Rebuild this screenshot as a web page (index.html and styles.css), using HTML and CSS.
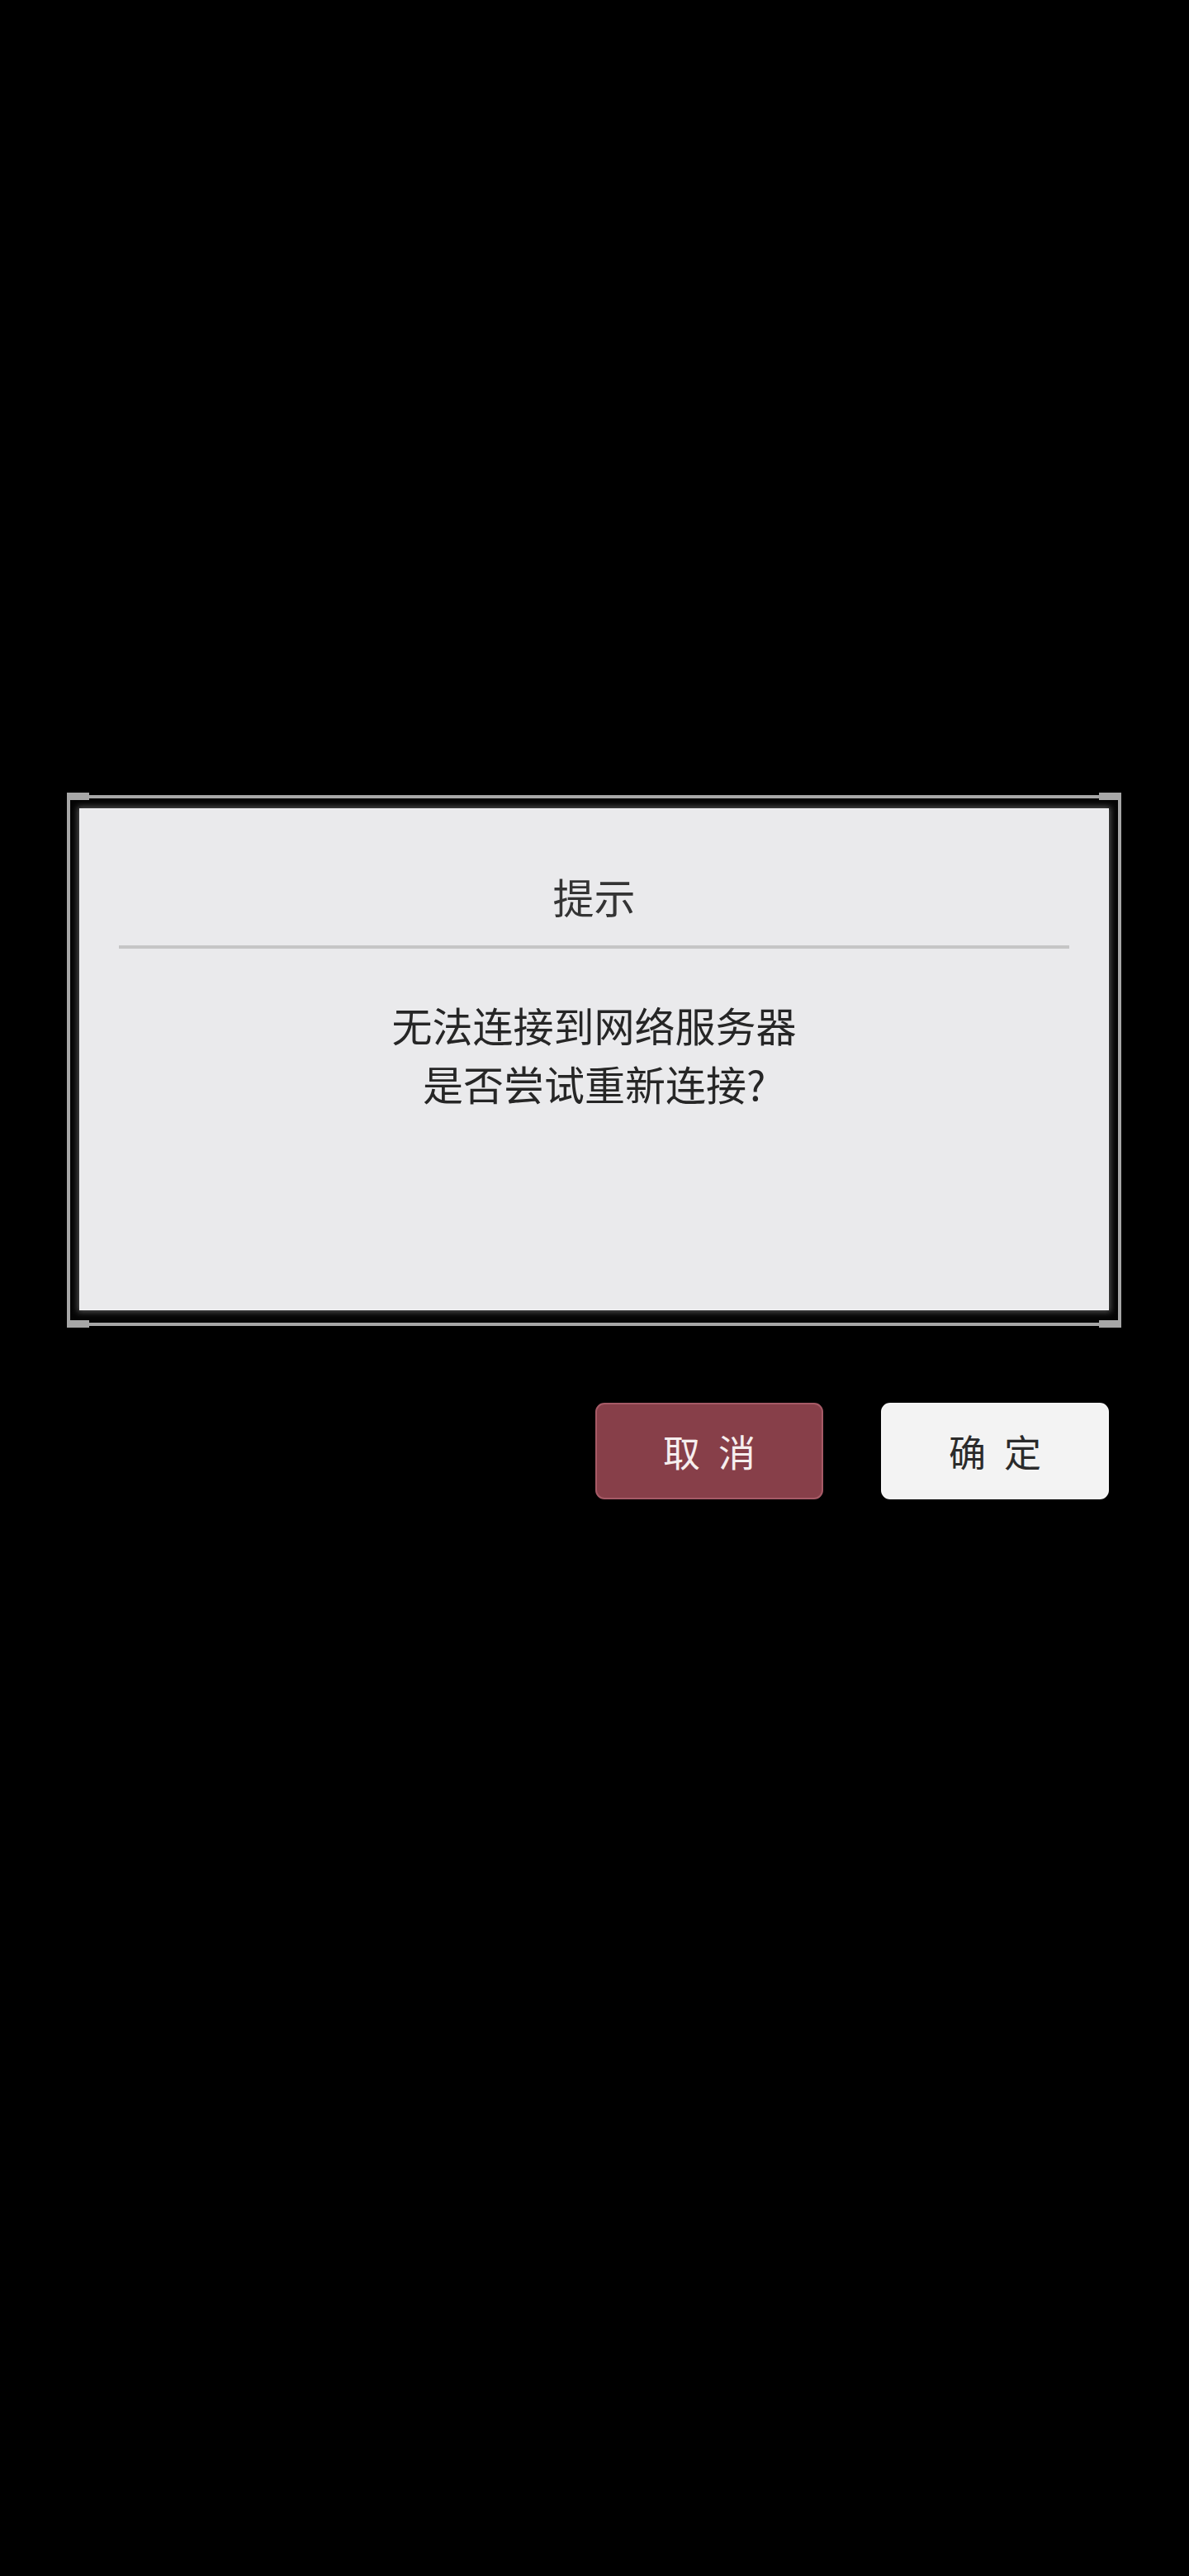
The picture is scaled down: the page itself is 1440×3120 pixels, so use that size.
FILE: index.html
```html
<!DOCTYPE html>
<html lang="zh-CN">
<head>
<meta charset="utf-8">
<title>提示</title>
<link rel="stylesheet" href="styles.css">
</head>
<body>
<div class="screen">
  <div class="dialog">
    <span class="tab tab-tl"></span>
    <span class="tab tab-tr"></span>
    <span class="tab tab-bl"></span>
    <span class="tab tab-br"></span>
    <div class="panel">
      <div class="title">提示</div>
      <div class="divider"></div>
      <div class="message">
        <p>无法连接到网络服务器</p>
        <p>是否尝试重新连接?</p>
      </div>
    </div>
  </div>
  <div class="actions">
    <button class="btn btn-cancel">取消</button>
    <button class="btn btn-ok">确定</button>
  </div>
</div>
</body>
</html>
```

FILE: styles.css
```css
html, body {
  margin: 0;
  padding: 0;
  background: #000;
}

body {
  width: 1440px;
  height: 3120px;
  overflow: hidden;
  font-family: "Noto Sans CJK SC", "Noto Sans", sans-serif;
}

.screen {
  padding-top: 963px;
}

.dialog {
  position: relative;
  box-sizing: border-box;
  width: 1277px;
  height: 643px;
  margin: 0 auto 0 81px;
  border: 4px solid #a7a7a7;
  background: #050505;
  padding: 12px 11px 15px 11px;
}

.tab {
  position: absolute;
  width: 27px;
  height: 9px;
  background: #a7a7a7;
}

.tab-tl { left: -4px; top: -7px; }
.tab-tr { right: -4px; top: -7px; }
.tab-bl { left: -4px; bottom: -6px; }
.tab-br { right: -4px; bottom: -6px; }

.panel {
  box-sizing: border-box;
  height: 100%;
  background: #eaeaec;
  border: 1px solid #f3f3f5;
  box-shadow: 0 0 7px 2px rgba(110, 110, 110, 0.75);
  padding-top: 73px;
  text-align: center;
}

.title {
  font-size: 50px;
  line-height: 64px;
  color: #343434;
}

.divider {
  height: 4px;
  margin: 28px 47px 0 47px;
  background: #c6c6c6;
}

.message {
  margin-top: 56px;
  font-size: 49px;
  line-height: 71px;
  color: #262626;
}

.message p {
  margin: 0;
}

.actions {
  display: flex;
  justify-content: flex-end;
  gap: 70px;
  margin-top: 93px;
  padding-right: 97px;
}

.btn {
  box-sizing: border-box;
  width: 276px;
  height: 117px;
  border-radius: 11px;
  font-family: "Noto Sans CJK SC", "Noto Sans", sans-serif;
  font-size: 45px;
  letter-spacing: 22px;
  padding: 0 0 0 22px;
  line-height: 1;
  cursor: pointer;
}

.btn-cancel {
  background: #873f49;
  border: 2px solid #a65a66;
  color: #f6eeee;
}

.btn-ok {
  background: #f3f3f3;
  border: 2px solid #f6f6f6;
  color: #2b2b2b;
}
```
